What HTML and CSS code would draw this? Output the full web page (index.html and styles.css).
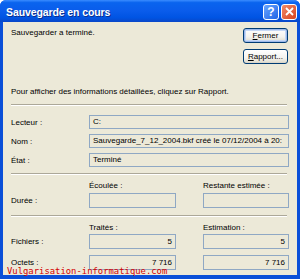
FILE: index.html
```html
<!DOCTYPE html>
<html lang="fr">
<head>
<meta charset="utf-8">
<title>Sauvegarde en cours</title>
<link rel="stylesheet" href="styles.css">
</head>
<body>
<div class="window">
  <div class="titlebar">
    <span class="title">Sauvegarde en cours</span>
    <div class="tbtns">
      <span class="tbtn help">?</span>
      <span class="tbtn close">
        <svg width="9" height="9" viewBox="0 0 9 9"><path d="M1 1 L8 8 M8 1 L1 8" stroke="#fff" stroke-width="1.8" fill="none"/></svg>
      </span>
    </div>
  </div>
  <div class="client">
    <div class="top">
      <div class="msg">Sauvegarder a terminé.</div>
      <div class="buttons">
        <button class="btn default"><u>F</u>ermer</button>
        <button class="btn"><u>R</u>apport...</button>
      </div>
    </div>
    <div class="info">Pour afficher des informations détaillées, cliquez sur Rapport.</div>
    <div class="sep"></div>
    <div class="fields">
      <span class="lbl">Lecteur :</span><div class="box">C:</div>
      <span class="lbl">Nom :</span><div class="box">Sauvegarde_7_12_2004.bkf créé le 07/12/2004 à 20:</div>
      <span class="lbl">État :</span><div class="box">Terminé</div>
    </div>
    <div class="sep s2"></div>
    <div class="grid g1">
      <span></span><span class="head">Écoulée :</span><span></span><span class="head">Restante estimée :</span>
      <span class="lbl">Durée :</span><div class="box"></div><span></span><div class="box"></div>
    </div>
    <div class="sep s3"></div>
    <div class="grid g2">
      <span></span><span class="head">Traités :</span><span></span><span class="head">Estimation :</span>
      <span class="lbl">Fichiers :</span><div class="box num">5</div><span></span><div class="box num">5</div>
      <span class="lbl">Octets :</span><div class="box num">7 716</div><span></span><div class="box num">7 716</div>
    </div>
  </div>
  <div class="watermark">Vulgarisation-informatique.com</div>
</div>
</body>
</html>
```

FILE: styles.css
```css
html, body {
  margin: 0;
  padding: 0;
  background: #ffffff;
}
.window {
  position: relative;
  width: 300px;
  height: 279px;
  display: flex;
  flex-direction: column;
  background: #0A4FD8;
  border-radius: 6px 6px 0 0;
  overflow: hidden;
  font-family: "Liberation Sans", Arial, sans-serif;
  font-size: 8px;
  color: #000;
}
.titlebar {
  height: 22px;
  flex: none;
  display: flex;
  align-items: center;
  justify-content: space-between;
  padding: 0 3px 0 6px;
  background: linear-gradient(#3A8CFF 0%, #0A64EE 12%, #0A5CEB 50%, #0054E3 80%, #0A47C8 100%);
}
.title {
  color: #fff;
  font-weight: bold;
  font-size: 10.5px;
  letter-spacing: -0.1px;
  text-shadow: 1px 1px 0 #0B2F8E;
  margin-top: 1px;
}
.tbtns {
  display: flex;
  gap: 2px;
  margin-top: 1px;
}
.tbtn {
  width: 14px;
  height: 14px;
  border: 1px solid #fff;
  border-radius: 3px;
  display: flex;
  align-items: center;
  justify-content: center;
  color: #fff;
  font-weight: bold;
  font-size: 12px;
}
.help {
  background: linear-gradient(135deg, #6AA6FF, #1F63E6);
}
.close {
  background: linear-gradient(135deg, #F08B6A, #D8431C);
}
.client {
  flex: 1;
  margin: 0 3px 4px;
  background: #ECE9D8;
  padding: 6px 8px 0 8px;
  display: flex;
  flex-direction: column;
}
.top {
  display: flex;
  justify-content: space-between;
  align-items: flex-start;
  line-height: 10px;
}
.buttons {
  display: flex;
  flex-direction: column;
  gap: 6px;
  margin-right: 1px;
}
.btn {
  width: 45px;
  height: 15px;
  padding: 0;
  font-family: inherit;
  font-size: 8px;
  color: #000;
  border: 1px solid #003C74;
  border-radius: 3px;
  background: linear-gradient(#FFFFFF 0%, #F4F3EE 60%, #E3E0D3 90%, #D6D0C5 100%);
}
.btn.default {
  box-shadow: inset 0 0 0 1px #9DB9EB, inset 0 0 0 2px #C6D8F5;
}
.info {
  margin-top: 23px;
  line-height: 10px;
}
.sep {
  height: 1px;
  background: #ACA899;
  border-bottom: 1px solid #fff;
  margin: 7px 2px 0 0;
}
.fields {
  display: grid;
  grid-template-columns: 78px 1fr;
  row-gap: 5px;
  align-items: center;
  margin-top: 9px;
}
.box {
  height: 14px;
  box-sizing: border-box;
  border: 1px solid #8FA8C4;
  background: #ECE9D8;
  padding: 0 3px;
  line-height: 12px;
  white-space: nowrap;
  overflow: hidden;
}
.box.num {
  text-align: right;
  height: 15px;
  line-height: 13px;
}
.s2 {
  margin-top: 6px;
}
.grid {
  display: grid;
  grid-template-columns: 78px 87px 27px 86px;
  align-items: center;
}
.grid .box {
  height: 15px;
}
.head {
  line-height: 10px;
}
.g1 {
  margin-top: 6px;
  row-gap: 2px;
}
.s3 {
  margin-top: 7px;
}
.g2 {
  margin-top: 6px;
  row-gap: 6px;
}
.g2 .head {
  margin-bottom: -5px;
}
.watermark {
  position: absolute;
  left: 7px;
  top: 266px;
  font-family: "DejaVu Sans Mono", monospace;
  font-size: 8.9px;
  line-height: 11px;
  color: #D40000;
}
```
